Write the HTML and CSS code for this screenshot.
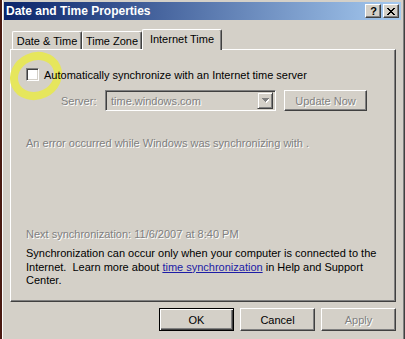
FILE: index.html
```html
<!DOCTYPE html>
<html>
<head>
<meta charset="utf-8">
<link rel="stylesheet" href="styles.css">
</head>
<body>
<div class="window">
  <div class="titlebar">
    <span class="title">Date and Time Properties</span>
    <div class="tbtns">
      <span class="tbtn help">?</span>
      <span class="tbtn close">
        <svg width="8" height="7" viewBox="0 0 8 7" shape-rendering="crispEdges">
          <path fill="#000" d="M0 0h2v1H0zM6 0h2v1H6zM1 1h2v1H1zM5 1h2v1H5zM2 2h4v1H2zM3 3h2v1H3zM2 4h4v1H2zM1 5h2v1H1zM5 5h2v1H5zM0 6h2v1H0zM6 6h2v1H6z"/>
        </svg>
      </span>
    </div>
  </div>
  <div class="body">
    <div class="tabs">
      <div class="tab t1">Date &amp; Time</div>
      <div class="tab t2">Time Zone</div>
      <div class="tab sel">Internet Time</div>
    </div>
    <div class="panel">
      <svg class="ring" width="80" height="60" viewBox="0 0 80 60">
        <ellipse cx="36" cy="31" rx="22.5" ry="19.5" transform="rotate(-25 36 31)" fill="none" stroke="#e6e65c" stroke-width="8"/>
      </svg>
      <div class="row chk-row">
        <span class="checkbox"></span>
        <span class="chk-label">Automatically synchronize with an Internet time server</span>
      </div>
      <div class="row server-row">
        <span class="srv-label dis">Server:</span>
        <div class="combo">
          <span class="combo-text dis">time.windows.com</span>
          <span class="drop">
            <svg width="7" height="5" viewBox="0 0 7 5" shape-rendering="crispEdges">
              <path fill="#fff" d="M1 1h7v1H1zM2 2h5v1H2zM3 3h3v1H3zM4 4h1v1H4z"/>
              <path fill="#808080" d="M0 0h7v1H0zM1 1h5v1H1zM2 2h3v1H2zM3 3h1v1H3z"/>
            </svg>
          </span>
        </div>
        <div class="btn upd dis">Update Now</div>
      </div>
      <div class="row err dis">An error occurred while Windows was synchronizing with .</div>
      <div class="row next dis">Next synchronization: 11/6/2007 at 8:40 PM</div>
      <p class="row info">Synchronization can occur only when your computer is connected to the<br>Internet.&nbsp; Learn more about <a class="link">time synchronization</a> in Help and Support<br>Center.</p>
    </div>
    <div class="footer">
      <div class="btn default">OK</div>
      <div class="btn">Cancel</div>
      <div class="btn dis">Apply</div>
    </div>
  </div>
</div>
</body>
</html>
```

FILE: styles.css
```css
* { box-sizing: border-box; }
html, body { margin: 0; padding: 0; }
body {
  background: #4a1a12;
  width: 405px;
  height: 339px;
  overflow: hidden;
  font-family: "Liberation Sans", Arial, sans-serif;
  font-size: 11px;
  color: #000;
}
.window {
  margin-left: 2px;
  width: 403px;
  height: 339px;
  background: #d4d0c8;
  border-left: 1px solid #fff;
  border-right: 1px solid #404040;
  box-shadow: inset -1px 0 #808080;
  padding: 2px 3px 0 1px;
}
.titlebar {
  height: 18px;
  background: linear-gradient(to right, #0a246a, #a6caf0);
  display: flex;
  align-items: center;
  justify-content: space-between;
  padding: 0 2px;
}
.title {
  color: #fff;
  font-weight: bold;
  font-size: 12px;
  line-height: 18px;
}
.tbtns { display: flex; gap: 2px; }
.tbtn {
  width: 16px;
  height: 14px;
  background: #d4d0c8;
  border: 1px solid;
  border-color: #fff #404040 #404040 #fff;
  box-shadow: inset -1px -1px #808080;
  display: flex;
  align-items: center;
  justify-content: center;
}
.help {
  font-weight: bold;
  font-size: 11px;
  line-height: 12px;
  padding-left: 1px;
}
.close svg { display: block; }

.body { padding: 9px 5px 0 6px; }
.tabs {
  display: flex;
  align-items: flex-end;
  height: 20px;
  padding-left: 2px;
}
.tab {
  height: 18px;
  border-left: 1px solid #fff;
  border-top: 1px solid #fff;
  border-right: 1px solid #404040;
  box-shadow: inset -1px 0 #808080;
  border-radius: 2px 2px 0 0;
  text-align: center;
  line-height: 17px;
  padding-top: 1px;
}
.t1 { width: 70px; }
.t2 { width: 60px; }
.tab.sel {
  width: 80px;
  height: 21px;
  margin-bottom: -1px;
  position: relative;
  z-index: 2;
  background: #d4d0c8;
  line-height: 18px;
  padding-top: 0;
}
.panel {
  position: relative;
  height: 253px;
  border: 1px solid;
  border-color: #fff #404040 #404040 #fff;
  box-shadow: inset -1px -1px #808080;
  padding: 18px 0 0 15px;
}
.ring {
  position: absolute;
  left: -11px;
  top: -5px;
}
.row { position: relative; }
.chk-row {
  display: flex;
  align-items: center;
  height: 13px;
}
.checkbox {
  width: 13px;
  height: 13px;
  background: #fff;
  border: 1px solid;
  border-color: #808080 #fff #fff #808080;
  box-shadow: inset 1px 1px #404040, inset -1px -1px #d4d0c8;
  margin-right: 5px;
}
.dis {
  color: #808080;
  text-shadow: 1px 1px 0 #fff;
}
.server-row {
  display: flex;
  align-items: center;
  margin-top: 9px;
  padding-left: 35px;
  height: 21px;
}
.srv-label { width: 44px; }
.combo {
  width: 171px;
  height: 21px;
  border: 1px solid;
  border-color: #808080 #fff #fff #808080;
  box-shadow: inset 1px 1px #404040, inset -1px -1px #d4d0c8;
  display: flex;
  align-items: center;
  justify-content: space-between;
  padding: 2px 2px 2px 5px;
}
.drop {
  width: 16px;
  height: 17px;
  border: 1px solid;
  border-color: #d4d0c8 #404040 #404040 #d4d0c8;
  box-shadow: inset 1px 1px #fff, inset -1px -1px #808080;
  display: flex;
  align-items: center;
  justify-content: center;
}
.drop svg { display: block; }
.btn {
  width: 75px;
  height: 23px;
  background: #d4d0c8;
  border: 1px solid;
  border-color: #fff #404040 #404040 #fff;
  box-shadow: inset -1px -1px #808080;
  display: flex;
  align-items: center;
  justify-content: center;
}
.upd {
  width: 83px;
  height: 21px;
  margin-left: 8px;
}
.err {
  margin-top: 26px;
  line-height: 13px;
}
.next {
  margin-top: 78px;
  line-height: 13px;
}
.info {
  margin: 6px 0 0 0;
  line-height: 13.5px;
}
.link {
  color: #1c1ca6;
  text-decoration: underline;
}
.footer {
  display: flex;
  justify-content: flex-end;
  gap: 6px;
  margin-top: 6px;
}
.btn.default {
  border-color: #000;
  box-shadow: inset 1px 1px #fff, inset -1px -1px #404040, inset -2px -2px #808080;
}
```
